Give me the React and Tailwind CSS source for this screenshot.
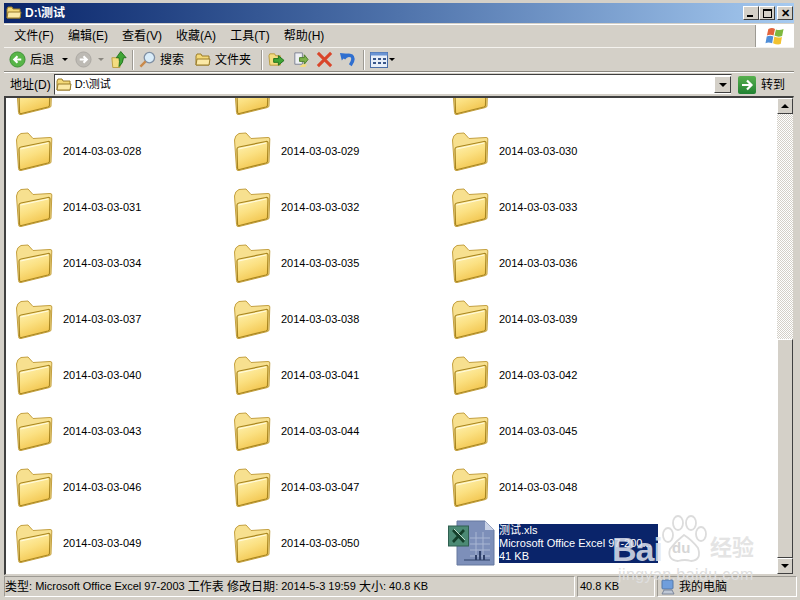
import React from "react";

const FONT = { fontFamily: "Tahoma, 'Liberation Sans', 'Noto Sans CJK SC', sans-serif" };

const rows = [
  ["028", "029", "030"],
  ["031", "032", "033"],
  ["034", "035", "036"],
  ["037", "038", "039"],
  ["040", "041", "042"],
  ["043", "044", "045"],
  ["046", "047", "048"],
];

const menus = ["文件(F)", "编辑(E)", "查看(V)", "收藏(A)", "工具(T)", "帮助(H)"];

function Folder() {
  return (
    <svg viewBox="0 0 38 39" className="w-[38px] h-[39px] shrink-0">
      <defs>
        <linearGradient id="foldFront" x1="0" y1="0" x2="0.45" y2="1">
          <stop offset="0" stopColor="#fff4b8" />
          <stop offset="0.55" stopColor="#fbe081" />
          <stop offset="1" stopColor="#f2c650" />
        </linearGradient>
      </defs>
      <path d="M0.5 8 Q1 3 5 1.5 L12 1 L17 6.5 L34 5.5 Q36 5.5 35.8 7 L35 30 Q35 31 33.5 31.5 L5 38.5 Q2.5 39 2.5 36.5 Z" fill="#f7e08f" stroke="#c4a040" strokeWidth="1" />
      <path d="M3 17 Q3 15.5 5 15 L32 9.5 Q34 9.2 34 11 L33.5 29.5 Q33.5 30.5 32 31 L5.5 37.5 Q3.5 38 3.5 36 Z" fill="url(#foldFront)" stroke="#a98620" strokeWidth="1.2" />
      <path d="M4.5 17 L32 11" fill="none" stroke="#fffbe0" strokeWidth="1" />
    </svg>
  );
}

function SmallFolder({ className = "w-4 h-4" }) {
  return (
    <svg viewBox="0 0 16 16" className={className}>
      <path d="M1 4 L2 2 L6 2 L7 4 L14 4 L14 13 L1 13 Z" fill="#f4d978" stroke="#9a7d2a" strokeWidth="1" />
      <path d="M2 7 L15 7 L14 13 L1 13 Z" fill="#fbe9a6" stroke="#9a7d2a" strokeWidth="1" />
    </svg>
  );
}

function NavCircle({ gray }) {
  return (
    <svg viewBox="0 0 18 18" className="w-[17px] h-[17px]">
      <circle cx="9" cy="9" r="8" fill={gray ? "#bdbab4" : "#58b548"} stroke={gray ? "#aaa7a1" : "#3c8f34"} />
      <path d="M13 9 H6 M9 5.5 L5.5 9 L9 12.5" fill="none" stroke="#fff" strokeWidth="2.2" transform={gray ? "rotate(180 9 9)" : undefined} />
    </svg>
  );
}

function Caret({ light, className = "" }) {
  return <span className={`block w-0 h-0 border-x-[3px] border-x-transparent border-t-[3px] ${light ? "border-t-[#8a8780]" : "border-t-black"} ${className}`} />;
}

function Sep({ className = "" }) {
  return <div className={`w-[2px] h-[20px] mx-[5px] border-l border-l-[#9d9a93] border-r border-r-white ${className}`} />;
}

function WinFlag() {
  return (
    <svg viewBox="0 0 22 20" className="w-[22px] h-[19px]">
      <path d="M4 2 Q8 0 11 2 L9.5 9 Q6 7.5 2.5 9 Z" fill="#e2643c" />
      <path d="M12 2.5 Q16 4 20 2 L18.5 9.5 Q14 11 10.5 9 Z" fill="#7db83f" />
      <path d="M2.3 10 Q6 8.5 9.2 10 L8 17 Q4 15.5 1 17 Z" fill="#4f8ed8" />
      <path d="M10.3 10 Q14 12 18.3 10.5 L17 18 Q13 19 9 17 Z" fill="#f2c230" />
    </svg>
  );
}

function CaptionButton({ children }) {
  return (
    <div className="w-[16px] h-[14px] bg-[#d4d0c8] border border-t-white border-l-white border-r-[#404040] border-b-[#404040] flex items-center justify-center">
      {children}
    </div>
  );
}

function FolderItem({ name }) {
  return (
    <div className="w-[218px] shrink-0 flex items-center pl-[11px] h-[56px]">
      <Folder />
      {name && <span className="ml-[9px] text-[11px] text-black">2014-03-03-{name}</span>}
    </div>
  );
}

function ExcelIcon() {
  return (
    <svg viewBox="0 0 48 46" className="w-[48px] h-[46px] shrink-0">
      <path d="M9 1 L37 1 L46 10 L46 45 L9 45 Z" fill="#7d8fb9" stroke="#66789f" />
      <path d="M37 1 L37 10 L46 10 Z" fill="#c9d2e6" />
      <path d="M22 18 H42 M22 24 H42 M22 30 H42 M22 36 H42 M28 12 V40 M35 12 V40" stroke="#a9b6d3" strokeWidth="1" fill="none" />
      <path d="M28 40 V35 M32 40 V31 M36 40 V35" stroke="#2f4069" strokeWidth="2" />
      <path d="M16 40 H42" stroke="#2f4069" strokeWidth="1" />
      <rect x="0.5" y="6" width="20" height="20" fill="#4c8a74" stroke="#2f5f50" />
      <path d="M5 10 L16 22 M16 10 L5 22" stroke="#143f2a" strokeWidth="2.6" />
      <path d="M6 9 L17 20" stroke="#cfe8d8" strokeWidth="0.9" />
    </svg>
  );
}

function ArrowButton({ up }) {
  return (
    <div className="h-[16px] bg-[#d4d0c8] border border-t-white border-l-white border-r-[#404040] border-b-[#404040] flex items-center justify-center shrink-0">
      <span className={`w-0 h-0 border-x-[4px] border-x-transparent ${up ? "border-b-[4px] border-b-black" : "border-t-[4px] border-t-black"}`} />
    </div>
  );
}

function Scrollbar() {
  return (
    <div className="w-[16px] flex flex-col shrink-0 bg-[repeating-conic-gradient(#d4d0c8_0_25%,#ffffff_0_50%)] bg-[length:2px_2px]">
      <ArrowButton up />
      <div className="flex-1" />
      <div className="h-[219px] shrink-0 bg-[#d4d0c8] border border-t-white border-l-white border-r-[#404040] border-b-[#404040]" />
      <ArrowButton />
    </div>
  );
}

function Watermark() {
  return (
    <div className="absolute left-[610px] top-[512px] w-[150px] h-[72px] pointer-events-none" style={{ fontFamily: "'Liberation Sans', sans-serif" }}>
      <span className="absolute left-[2px] top-[20px] text-[34px] font-bold leading-[34px] text-[#dfe3ee]/85 tracking-[-1px]">Bai</span>
      <svg viewBox="0 0 46 50" className="absolute left-[51px] top-[2px] w-[46px] h-[50px]" fill="none" stroke="#dcdcdc" strokeWidth="1.8">
        <ellipse cx="7" cy="21" rx="5" ry="7" />
        <ellipse cx="17" cy="9" rx="5" ry="7" />
        <ellipse cx="30" cy="9" rx="5" ry="7" />
        <ellipse cx="40" cy="20" rx="5" ry="7" />
        <path d="M23 21 Q31 26 37 34 Q41 46 30 47 Q24 45 17 47 Q6 46 9 35 Q15 27 23 21 Z" />
      </svg>
      <span className="absolute left-[62px] top-[28px] text-[15px] font-bold leading-none text-[#d6d6d6]">du</span>
      <span className="absolute left-[100px] top-[22px] text-[22px] leading-none font-bold text-[#e4e4e4]" style={{ fontFamily: "'Noto Sans CJK SC', sans-serif" }}>经验</span>
      <span className="absolute left-[8px] top-[56px] text-[16px] leading-[14px] tracking-[0.4px] whitespace-nowrap text-[#dedede]">jingyan.baidu.com</span>
    </div>
  );
}

export default function App() {
  return (
    <div className="relative w-[800px] h-[600px] overflow-hidden bg-[#d4d0c8] pl-[4px] pr-[6px] pt-[3px] pb-[3px] flex flex-col text-[12px] text-black" style={FONT}>
      {/* title bar */}
      <div className="h-[20px] shrink-0 flex items-center pl-[2px] pr-[1px] bg-gradient-to-r from-[#0a246a] via-[#4f73ab] to-[#a6caf0]">
        <SmallFolder />
        <span className="ml-[3px] text-[12px] font-bold text-white">D:\测试</span>
        <div className="ml-auto flex">
          <CaptionButton><span className="w-[6px] h-[2px] bg-black mt-[6px] mr-[2px]" /></CaptionButton>
          <CaptionButton><span className="w-[9px] h-[9px] border border-black border-t-2" /></CaptionButton>
          <div className="ml-[2px]"><CaptionButton><span className="text-[11px] leading-none font-bold">✕</span></CaptionButton></div>
        </div>
      </div>

      {/* menu */}
      <div className="h-[24px] shrink-0 mt-[1px] flex items-center border-t border-t-white border-b border-b-[#f4f2ee]">
        <div className="flex-1 flex items-center pl-[9px] gap-[12px]">
          {menus.map((m) => (
            <span key={m} className="w-[42px] text-center whitespace-nowrap">{m}</span>
          ))}
        </div>
        <div className="w-[39px] h-full bg-white flex items-center justify-center border-l border-l-[#9d9a93]">
          <WinFlag />
        </div>
      </div>

      {/* toolbar */}
      <div className="h-[24px] shrink-0 flex items-center pl-[5px] border-b border-b-[#8a877f]">
        <NavCircle />
        <span className="ml-[4px]">后退</span>
        <Caret className="ml-[8px]" />
        <span className="ml-[7px] flex items-center"><NavCircle gray /></span>
        <Caret light className="ml-[6px]" />
        <svg viewBox="0 0 18 20" className="w-[16px] h-[19px] ml-[7px]">
          <path d="M1 8 H12 L10 19 H2 Z" fill="#f3dc80" stroke="#b89a3c" />
          <path d="M11 1 L17 8 H14 Q14 14 9 18 Q10 12 9 8 H6 Z" fill="#3fa535" stroke="#1e6e1a" />
        </svg>
        <Sep />
        <svg viewBox="0 0 18 18" className="w-[17px] h-[17px]">
          <circle cx="11" cy="7" r="5.5" fill="#d9ecf9" stroke="#7f8fa3" strokeWidth="1.4" />
          <path d="M7 11 L1.5 16.5" stroke="#c9894a" strokeWidth="2.5" />
        </svg>
        <span className="ml-[4px]">搜索</span>
        <SmallFolder className="w-[16px] h-[16px] ml-[11px]" />
        <span className="ml-[4px]">文件夹</span>
        <Sep className="ml-[10px]" />
        <svg viewBox="0 0 18 18" className="w-[17px] h-[17px]">
          <path d="M1 5 L2 3 H7 L8 5 H13 V15 H2 Z" fill="#f3dc80" stroke="#b89a3c" />
          <path d="M6 8 H11 V5 L17 10 L11 15 V12 H6 Z" fill="#3fa535" stroke="#1e6e1a" />
        </svg>
        <svg viewBox="0 0 18 18" className="w-[17px] h-[17px] ml-[7px]">
          <path d="M3 2 H11 V14 H3 Z" fill="#eef0f4" stroke="#7c8192" />
          <path d="M8 7 H13 V4 L17 9 L13 14 V11 H8 Z" fill="#7eb24a" stroke="#4c7c2a" />
          <path d="M11 14 L16 14 L14 17 H8 Z" fill="#f3dc80" />
        </svg>
        <svg viewBox="0 0 18 18" className="w-[17px] h-[17px] ml-[7px]">
          <path d="M2 2 L16 16 M16 2 L2 16" stroke="#d9452a" strokeWidth="3.2" />
        </svg>
        <svg viewBox="0 0 18 18" className="w-[17px] h-[17px] ml-[6px]">
          <path d="M5 8 Q8 3 13 5 Q17 8 12 15" fill="none" stroke="#2f6fd0" strokeWidth="3.6" />
          <path d="M1 2 L9 3 L3 10 Z" fill="#2f6fd0" />
        </svg>
        <Sep className="ml-[7px]" />
        <svg viewBox="0 0 18 16" className="w-[18px] h-[16px]">
          <rect x="0.5" y="0.5" width="17" height="15" fill="#e8eef8" stroke="#4a6ea8" />
          <rect x="0.5" y="0.5" width="17" height="3" fill="#6a94d4" />
          <path d="M3 6 h3 v2 h-3 z M8 6 h3 v2 h-3 z M13 6 h3 v2 h-3 z M3 10 h3 v2 h-3 z M8 10 h3 v2 h-3 z M13 10 h3 v2 h-3 z" fill="#39578c" />
        </svg>
        <Caret className="ml-[1px]" />
      </div>

      {/* address bar */}
      <div className="h-[24px] shrink-0 flex items-center pl-[6px] border-t border-t-white">
        <span className="whitespace-nowrap">地址(D)</span>
        <div className="ml-[3px] flex-1 h-[21px] bg-white border border-t-[#404040] border-l-[#404040] border-r-[#d4d0c8] border-b-[#d4d0c8] flex items-center pl-[1px] min-w-0">
          <SmallFolder />
          <span className="ml-[3px] text-[11px]">D:\测试</span>
          <div className="ml-auto w-[17px] h-[17px] bg-[#d4d0c8] border border-t-white border-l-white border-r-[#404040] border-b-[#404040] flex items-center justify-center">
            <span className="w-0 h-0 border-x-[4px] border-x-transparent border-t-[4px] border-t-black" />
          </div>
        </div>
        <div className="w-[62px] shrink-0 flex items-center pl-[6px]">
          <div className="w-[18px] h-[18px] rounded-[2px] bg-gradient-to-b from-[#57b04f] to-[#1f8232] flex items-center justify-center">
            <svg viewBox="0 0 14 14" className="w-[14px] h-[14px]">
              <path d="M2 7 H11 M7 2.5 L11.5 7 L7 11.5" fill="none" stroke="#fff" strokeWidth="2.2" />
            </svg>
          </div>
          <span className="ml-[5px] whitespace-nowrap">转到</span>
        </div>
      </div>

      {/* folder list */}
      <div className="flex-1 min-h-0 flex bg-white border-t-2 border-t-[#404040] border-l-2 border-l-[#404040] border-r border-r-[#d4d0c8] border-b border-b-[#d4d0c8]">
        <div className="flex-1 min-w-0 overflow-hidden -ml-[1px]">
          <div className="h-[25px] overflow-hidden">
            <div className="flex -mt-[31px]">
              <FolderItem />
              <FolderItem />
              <FolderItem />
            </div>
          </div>
          {rows.map((row) => (
            <div key={row[0]} className="flex">
              {row.map((n) => <FolderItem key={n} name={n} />)}
            </div>
          ))}
          <div className="flex h-[56px]">
            <FolderItem name="049" />
            <FolderItem name="050" />
            <div className="pl-[7px] flex items-center">
              <ExcelIcon />
              <div className="w-[159px] h-[39px] ml-[3px] bg-[#0a246a] text-white text-[11px] leading-[13px] whitespace-nowrap">
                <div>测试.xls</div>
                <div>Microsoft Office Excel 97-200...</div>
                <div>41 KB</div>
              </div>
            </div>
          </div>
        </div>
        <Scrollbar />
      </div>

      {/* status bar */}
      <div className="h-[21px] shrink-0 mt-[1px] -mr-[3px] flex items-stretch text-[11px]">
        <div className="flex-1 min-w-0 flex items-center border border-t-[#9d9a93] border-l-[#9d9a93] border-r-white border-b-white whitespace-pre overflow-hidden">
          <span className="text-[12px]">类型</span>: Microsoft Office Excel 97-2003 <span className="text-[12px]">工作表 修改日期</span>: 2014-5-3 19:59 <span className="text-[12px]">大小</span>: 40.8 KB
        </div>
        <div className="w-[78px] ml-[2px] flex items-center pl-[2px] border border-t-[#9d9a93] border-l-[#9d9a93] border-r-white border-b-white">40.8 KB</div>
        <div className="w-[140px] ml-[2px] flex items-center pl-[3px] border border-t-[#9d9a93] border-l-[#9d9a93] border-r-white border-b-white text-[12px]">
          <svg viewBox="0 0 14 16" className="w-[14px] h-[16px]">
            <rect x="1" y="1" width="11" height="9" rx="1" fill="#6f9edc" stroke="#5578a8" />
            <path d="M3 11 H11 L13 15 H1 Z" fill="#bfc8d6" stroke="#7c8699" />
          </svg>
          <span className="ml-[4px]">我的电脑</span>
        </div>
      </div>

      <Watermark />
    </div>
  );
}
